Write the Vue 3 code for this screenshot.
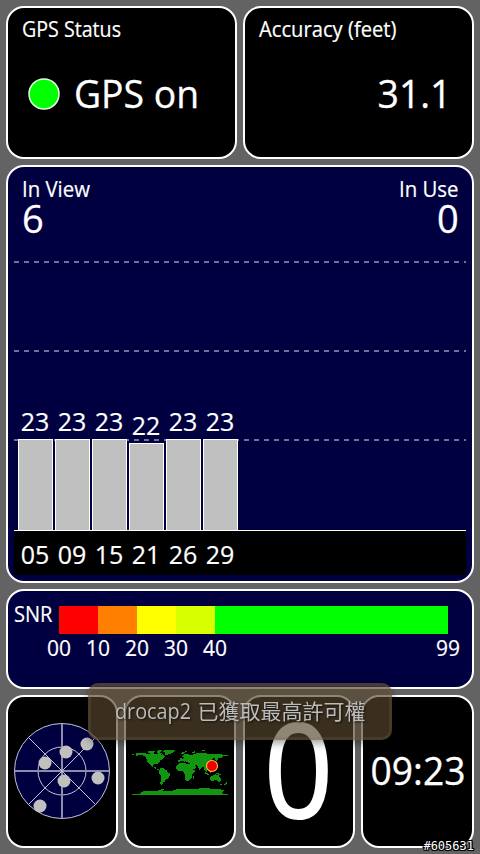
<script setup>
const satellites = [
  { id: "05", snr: 23, top: 439 },
  { id: "09", snr: 23, top: 439 },
  { id: "15", snr: 23, top: 439 },
  { id: "21", snr: 22, top: 443 },
  { id: "26", snr: 23, top: 439 },
  { id: "29", snr: 23, top: 439 },
];
const gridLines = [262, 351, 440];
const scale = [
  { label: "00", x: 59, width: 39, color: "#ff0000" },
  { label: "10", x: 98, width: 39, color: "#ff8000" },
  { label: "20", x: 137, width: 39, color: "#ffff00" },
  { label: "30", x: 176, width: 39, color: "#d8ff00" },
  { label: "40", x: 215, width: 233, color: "#00ff00" },
  { label: "99", x: 448, width: 0, color: "#00ff00" },
];
const skyDots = [
  [87, 744],
  [66, 752],
  [45, 763],
  [64, 781],
  [98, 778],
  [40, 806],
];
</script>

<template>
  <div class="screen">
    <div class="row top">
      <div class="panel">
        <svg class="fill" viewBox="8 8 227 149">
          <text x="22" y="37" class="label" textLength="99" lengthAdjust="spacingAndGlyphs">GPS Status</text>
          <circle cx="44" cy="94" r="15" fill="#00ff00" stroke="#e8ffe8" stroke-width="1.5" />
          <text x="74" y="107.500" class="value" textLength="125" lengthAdjust="spacingAndGlyphs">GPS on</text>
        </svg>
      </div>
      <div class="panel">
        <svg class="fill" viewBox="245 8 227 149">
          <text x="259" y="37" class="label" textLength="137.500" lengthAdjust="spacingAndGlyphs">Accuracy (feet)</text>
          <text x="377.500" y="107.500" class="value" textLength="74" lengthAdjust="spacingAndGlyphs">31.1</text>
        </svg>
      </div>
    </div>

    <div class="panel navy chart">
      <svg class="fill" viewBox="8 167 464 414">
        <text x="22" y="197" class="label" textLength="68" lengthAdjust="spacingAndGlyphs">In View</text>
        <text x="22" y="233" class="value">6</text>
        <text x="399" y="197" class="label" textLength="59.500" lengthAdjust="spacingAndGlyphs">In Use</text>
        <text x="437" y="233" class="value">0</text>
        <line
          v-for="y in gridLines"
          :key="y"
          x1="14"
          x2="466"
          :y1="y"
          :y2="y"
          class="grid"
        />
        <rect x="14" y="531" width="452" height="44" fill="#000" />
        <g v-for="(sat, i) in satellites" :key="sat.id">
          <rect
            :x="18.5 + i * 37"
            :y="sat.top + 0.5"
            width="34"
            :height="91 - (sat.top - 439)"
            class="bar"
          />
          <text :x="35 + i * 37" :y="sat.top - 8" class="number">{{ sat.snr }}</text>
          <text :x="35 + i * 37" y="564" class="number">{{ sat.id }}</text>
        </g>
        <rect x="14" y="530" width="452" height="1" fill="#fff" />
      </svg>
    </div>

    <div class="panel navy snr">
      <svg class="fill" viewBox="8 591 464 96">
        <text x="14" y="622" class="label" textLength="38.500" lengthAdjust="spacingAndGlyphs">SNR</text>
        <g v-for="step in scale" :key="step.label">
          <rect :x="step.x" y="606" :width="step.width" height="28" :fill="step.color" />
          <text
            :x="step.x - 12"
            y="656"
            class="label"
            textLength="24"
            lengthAdjust="spacingAndGlyphs"
          >{{ step.label }}</text>
        </g>
      </svg>
    </div>

    <div class="row bottom">
      <div class="panel">
        <svg class="fill" viewBox="8 697 108 149">
          <circle cx="62" cy="771" r="47.5" fill="#000040" />
          <g class="radar">
            <circle cx="62" cy="771" r="47.5" />
            <circle cx="62" cy="771" r="24" />
            <path d="M14.5 771H109.500M62 723.500V818.500" class="axis" />
            <path d="M28.500 737.500L95.500 804.500M95.500 737.500L28.500 804.500" />
          </g>
          <circle v-for="(dot, i) in skyDots" :key="i" :cx="dot[0]" :cy="dot[1]" r="6.5" fill="#c0c0c0" />
        </svg>
      </div>
      <div class="panel">
        <svg class="fill" viewBox="126 697 108 149">
          <g transform="translate(128 742) scale(0.3333)" fill="#129612" shape-rendering="crispEdges">
            <path d="M12 36h6v3h-6zM24 33L50 33 60 36 75 32 84 37 92 35 96 40 104 36 111 45 104 52 96 56 93 62 88 66 89 71 85 67 77 67 75 73 80 75 84 73 84 79 91 82 95 85 88 84 80 78 70 73 64 66 58 58 54 48 48 41 38 39 24 42z" />
            <path d="M60 28h12v4H60zM72 26h9l-3 6h-6zM84 30l9-6h12l-9 9 9 3-9 3zM103 27L114 24 141 24 137 31 131 34 122 36 115 40 110 36 110 31z" />
            <path d="M96 80L104 77 112 83 117 86 119 91 127 95 124 104 121 110 114 113 110 119 105 122 101 129 99 131 97 123 100 113 100 103 93 95 93 88z" />
            <path d="M144 76L149 67 158 62 170 62 174 66 187 66 192 76 197 84 203 84 199 92 193 98 193 105 188 110 184 116 177 119 172 112 171 102 168 90 161 86 151 87 145 82z" />
            <path d="M149 59L151 54 158 52 156 48 163 50 168 46 161 46 163 42 172 35 182 36 188 40 200 36 211 32 226 32 243 36 258 37 270 36 284 38 299 39 299 42 286 43 280 48 270 48 267 58 261 52 264 47 252 50 248 58 250 64 244 68 246 77 240 84 236 82 237 92 231 87 227 76 220 77 216 86 212 79 207 71 199 68 206 75 197 82 192 83 186 70 185 63 177 61 171 57 170 62 165 57 158 58 154 62z" />
            <path d="M156 36l6-5h9l-6 5zM170 27h8v3h-8zM192 32l8-6h4l-5 8zM222 25h9v3h-9z" />
            <path d="M246 107L252 102 257 98 263 97 267 101 270 96 274 103 280 110 278 117 272 120 267 116 261 114 253 117 248 117zM277 125h5v3h-5zM294 120h4v4l-7 6h-3zM264 92l9 2 8 5-5 1-12-5zM230 88l7 5 7 5-3 2-9-5zM244 87l6-3v8l-5 2zM196 104l3-3v8l-4 5-2-3z" />
            <path d="M12 156L36 155 39 149 51 148 66 147 84 147 96 144 102 140 108 140 105 147 120 148 135 146 147 142 174 142 192 140 207 141 222 138 237 138 255 141 273 141 289 145 283 151 286 155 300 156 300 160 12 160z" />
          </g>
          <circle cx="212" cy="766" r="5.500" fill="#f00000" stroke="#ffc040" stroke-width="1.100" />
        </svg>
      </div>
      <div class="panel">
        <svg class="fill" viewBox="245 697 108 149">
          <text x="264" y="818" class="speed" textLength="69" lengthAdjust="spacingAndGlyphs">0</text>
        </svg>
      </div>
      <div class="panel">
        <svg class="fill" viewBox="363 697 109 149">
          <text x="370.500" y="784.500" class="value" textLength="95" lengthAdjust="spacingAndGlyphs">09:23</text>
        </svg>
      </div>
    </div>

    <div class="toast">
      <svg class="toast-text" viewBox="0 0 256 34">
        <text x="3" y="24" class="latin" textLength="76" lengthAdjust="spacingAndGlyphs">drocap2</text>
        <text x="85.500" y="24" class="cjk" textLength="168" lengthAdjust="spacingAndGlyphs">已獲取最高許可權</text>
      </svg>
    </div>
    <div class="stamp">#605631</div>
  </div>
</template>

<style>
body {
  margin: 0;
  background: #636363;
}
</style>

<style scoped>
.screen {
  position: relative;
  box-sizing: border-box;
  width: 480px;
  height: 854px;
  padding: 6px;
  display: flex;
  flex-direction: column;
  gap: 6px;
  background: #636363;
  overflow: hidden;
  font-family: "Open Sans", "Noto Sans", "Noto Sans CJK TC", sans-serif;
}
.row {
  display: grid;
  gap: 6px;
  height: 153px;
}
.top {
  grid-template-columns: 231px 231px;
}
.bottom {
  grid-template-columns: 112px 112px 112px 113px;
  column-gap: 6px;
}
.bottom .panel:nth-child(n + 3) {
  margin-left: 1px;
  margin-right: -1px;
}
.panel {
  box-sizing: border-box;
  border: 2px solid #fff;
  border-radius: 18px;
  background: #000;
  overflow: hidden;
}
.navy {
  background: #000040;
}
.chart {
  height: 418px;
}
.snr {
  height: 100px;
}
.fill {
  display: block;
  width: 100%;
  height: 100%;
}
text {
  fill: #fff;
  stroke: #fff;
  stroke-width: 0.2;
}
.label {
  font-size: 22px;
}
.value {
  font-size: 38px;
  stroke-width: 0.3;
}
.number {
  font-size: 25px;
  text-anchor: middle;
}
.speed {
  font-size: 130px;
  stroke-width: 2;
}
.grid {
  stroke: #70709c;
  stroke-width: 2;
  stroke-dasharray: 5 5;
}
.bar {
  fill: #c0c0c0;
  stroke: #fff;
  stroke-width: 1;
}
.radar {
  fill: none;
  stroke: #c4c4d8;
  stroke-width: 1;
}
.axis {
  stroke: #8c8cac;
  stroke-width: 2;
}
.toast {
  position: absolute;
  left: 88px;
  top: 683px;
  box-sizing: border-box;
  width: 304px;
  height: 57px;
  padding: 9px 21px;
  border: 3px solid rgba(120, 110, 85, 0.2);
  border-radius: 10px;
  background: rgba(88, 71, 45, 0.66);
  box-shadow: 0 3px 8px rgba(0, 0, 0, 0.4);
}
.toast-text {
  display: block;
  width: 256px;
  height: 34px;
  filter: drop-shadow(1px 1px 1px rgba(0, 0, 0, 0.7));
}
.toast-text text {
  fill: #bcbcbc;
  stroke: none;
}
.latin {
  font-size: 22px;
}
.cjk {
  font-family: "Noto Sans CJK TC", sans-serif;
  font-size: 21px;
}
.stamp {
  position: absolute;
  right: 6px;
  bottom: 1px;
  color: #fff;
  font: 12px/14px "DejaVu Sans Mono", monospace;
  text-shadow: 1px 0 #000, -1px 0 #000, 0 1px #000, 0 -1px #000, 1px 1px #000, -1px -1px #000,
    1px -1px #000, -1px 1px #000;
}
</style>
